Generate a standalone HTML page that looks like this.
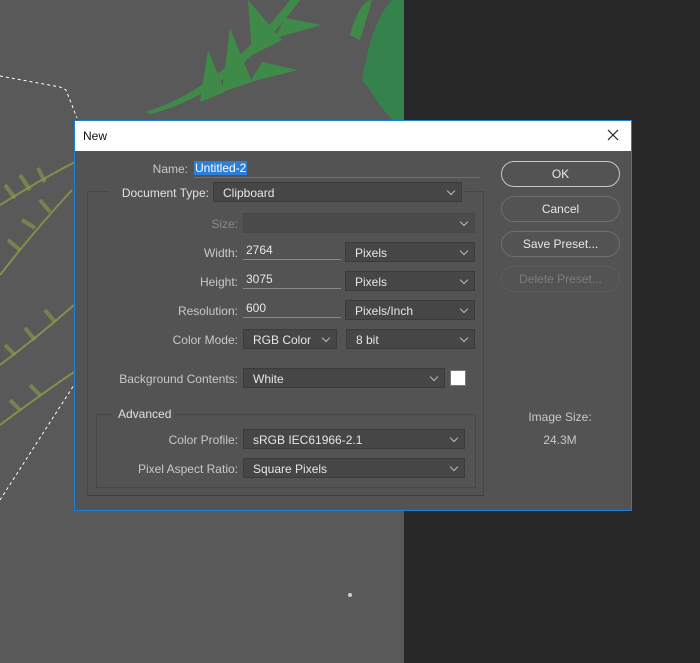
<!DOCTYPE html>
<html><head><style>
*{margin:0;padding:0;box-sizing:border-box}
body{width:700px;height:663px;overflow:hidden;position:relative;background:#282828;font-family:"Liberation Sans",sans-serif;font-size:12px;color:#d6d6d6}
.a{position:absolute}
.lbl{position:absolute;text-align:right;color:#c8c8c8;white-space:nowrap}
.dd{position:absolute;height:20px;background:#464646;border:1px solid #3b3b3b;color:#e6e6e6;padding:3px 0 0 9px;white-space:nowrap}
.dd:after{content:"";position:absolute;right:7px;top:5px;width:5px;height:5px;border-right:1px solid #bbb;border-bottom:1px solid #bbb;transform:rotate(45deg)}
.in{position:absolute;height:19px;border-bottom:1px solid #8a8a8a;color:#e6e6e6;padding:2px 0 0 3px}
.btn{position:absolute;left:501px;width:119px;height:26px;border:1px solid #7a7a7a;border-radius:13px;text-align:center;line-height:24px;color:#e8e8e8}
</style></head><body>
<div class="a" style="left:0;top:0;width:404px;height:663px;background:#595959"></div>
<svg class="a" style="left:0;top:0" width="404" height="663">
<g fill="#3c9347" opacity=".85">
<path d="M145 112 Q220 90 290 0 L300 0 Q230 95 150 114Z"/>
<path d="M200 102 L208 50 L225 92Z"/><path d="M222 92 L230 28 L252 82Z"/><path d="M250 82 L298 70 L262 62Z"/><path d="M252 55 L248 0 L282 40Z"/><path d="M275 38 L322 25 L285 18Z"/>
<path d="M350 35 Q360 0 372 0 L360 40Z"/><path d="M362 80 Q372 20 392 0 L404 0 L404 120 L392 120 Q375 100 370 90Z" fill="#2f8a4a"/>
</g>
<g stroke="#8aa04a" stroke-width="2" fill="none" opacity=".8">
<path d="M0 205 Q40 180 75 162"/><path d="M0 275 Q35 230 72 190"/><path d="M0 365 Q40 335 74 305"/><path d="M0 425 Q40 395 74 372"/>
</g>
<g stroke="#8aa04a" stroke-width="4" opacity=".6">
<path d="M15 198 L5 185 M30 190 L20 175 M45 182 L38 168 M20 250 L8 240 M35 228 L22 220 M50 212 L40 200 M15 355 L5 345 M35 340 L25 328 M55 322 L45 310 M20 410 L10 400 M40 395 L30 385"/>
</g>
<path d="M0 76 L60 87 L66 90 L77 118" stroke="#fff" stroke-dasharray="3 3" fill="none"/>
<path d="M0 500 L74 385" stroke="#fff" stroke-dasharray="3 3" fill="none"/>
<circle cx="350" cy="595" r="2" fill="#ccc"/>
</svg>
<div class="a" style="left:74px;top:120px;width:558px;height:391px;border:1px solid #1a7fd8;background:#535353"></div>
<div class="a" style="left:75px;top:121px;width:556px;height:30px;background:#fff;color:#111;font-size:12px;padding:8px 0 0 8px">New</div>
<svg class="a" style="left:607px;top:129px" width="12" height="12"><path d="M1 1L11 11M11 1L1 11" stroke="#222" stroke-width="1.2"/></svg>
<div class="lbl" style="left:100px;width:88px;top:162px">Name:</div>
<div class="a" style="left:194px;top:161px;width:286px;height:17px;border-bottom:1px solid #2a7fd4"><span style="background:#2d7fd6;color:#fff;padding:0 1px">Untitled-2</span></div>
<div class="a" style="left:87px;top:191px;width:397px;height:305px;border:1px solid #474747;border-bottom-color:#3e3e3e"></div>
<div class="a" style="left:108px;top:185px;width:107px;height:12px;background:#535353"></div>
<div class="a" style="left:462px;top:185px;width:3px;height:12px;background:#535353"></div>
<div class="lbl" style="left:110px;width:99px;top:186px;color:#e0e0e0">Document Type:</div>
<div class="dd" style="left:213px;top:182px;width:249px">Clipboard</div>
<div class="lbl" style="left:180px;width:58px;top:217px;color:#8a8a8a">Size:</div>
<div class="dd" style="left:243px;top:213px;width:232px;background:#4b4b4b;border-color:#474747"></div>
<div class="lbl" style="left:180px;width:58px;top:246px">Width:</div>
<div class="in" style="left:243px;top:241px;width:98px">2764</div>
<div class="dd" style="left:345px;top:242px;width:130px">Pixels</div>
<div class="lbl" style="left:180px;width:58px;top:275px">Height:</div>
<div class="in" style="left:243px;top:270px;width:98px">3075</div>
<div class="dd" style="left:345px;top:271px;width:130px">Pixels</div>
<div class="lbl" style="left:150px;width:88px;top:304px">Resolution:</div>
<div class="in" style="left:243px;top:299px;width:98px">600</div>
<div class="dd" style="left:345px;top:300px;width:130px">Pixels/Inch</div>
<div class="lbl" style="left:150px;width:88px;top:333px">Color Mode:</div>
<div class="dd" style="left:243px;top:329px;width:94px">RGB Color</div>
<div class="dd" style="left:346px;top:329px;width:129px">8 bit</div>
<div class="lbl" style="left:100px;width:138px;top:372px">Background Contents:</div>
<div class="dd" style="left:243px;top:368px;width:202px">White</div>
<div class="a" style="left:450px;top:370px;width:16px;height:16px;background:#fff;border:1px solid #777"></div>
<div class="a" style="left:96px;top:414px;width:380px;height:74px;border:1px solid #474747"></div>
<div class="a" style="left:112px;top:408px;width:62px;height:12px;background:#535353"></div>
<div class="a" style="left:118px;top:407px;color:#e0e0e0">Advanced</div>
<div class="lbl" style="left:120px;width:118px;top:433px">Color Profile:</div>
<div class="dd" style="left:243px;top:429px;width:222px">sRGB IEC61966-2.1</div>
<div class="lbl" style="left:110px;width:128px;top:462px">Pixel Aspect Ratio:</div>
<div class="dd" style="left:243px;top:458px;width:222px">Square Pixels</div>
<div class="btn" style="top:161px;border-color:#c8c8c8">OK</div>
<div class="btn" style="top:196px;border-color:#6e6e6e">Cancel</div>
<div class="btn" style="top:231px;border-color:#6e6e6e">Save Preset...</div>
<div class="btn" style="top:266px;border-color:#5c5c5c;color:#7c7c7c">Delete Preset...</div>
<div class="a" style="left:500px;width:120px;text-align:center;top:410px;color:#c8c8c8">Image Size:</div>
<div class="a" style="left:500px;width:120px;text-align:center;top:433px;color:#c8c8c8">24.3M</div>
</body></html>
